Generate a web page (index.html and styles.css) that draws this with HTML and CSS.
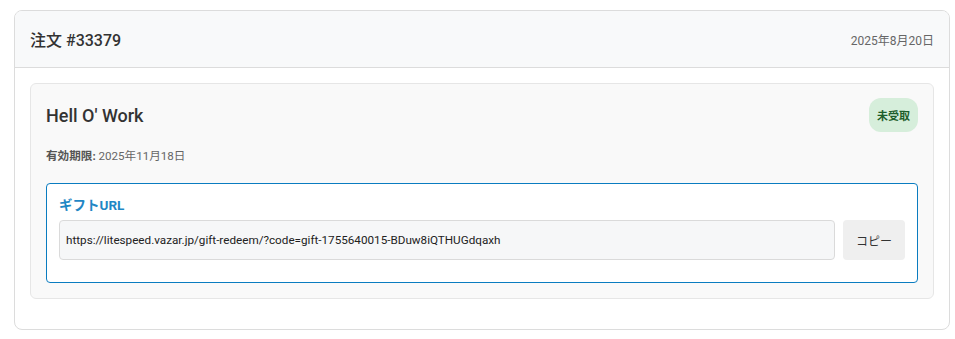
FILE: index.html
```html
<!DOCTYPE html>
<html lang="ja">
<head>
    <meta charset="UTF-8">
    <meta name="viewport" content="width=device-width, initial-scale=1.0">
    <title>注文 #33379</title>
    <link rel="stylesheet" href="styles.css">
</head>
<body>

    <div class="page">
        <div class="order-card">
            <!-- Order header -->
            <div class="order-header">
                <h2 class="order-title">注文 #33379</h2>
                <span class="order-date">2025年8月20日</span>
            </div>

            <div class="order-body">
                <!-- Gift item -->
                <div class="gift-card">
                    <div class="gift-top">
                        <h3 class="gift-name">Hell O' Work</h3>
                        <span class="status-badge">未受取</span>
                    </div>

                    <p class="gift-expiry"><strong>有効期限:</strong> 2025年11月18日</p>

                    <div class="gift-url-box">
                        <div class="gift-url-label">ギフトURL</div>
                        <div class="url-row">
                            <input type="text" class="url-input" id="giftUrl" readonly
                                   value="https://litespeed.vazar.jp/gift-redeem/?code=gift-1755640015-BDuw8iQTHUGdqaxh">
                            <button class="copy-btn" type="button">コピー</button>
                        </div>
                    </div>
                </div>
            </div>
        </div>
    </div>

</body>
</html>
```

FILE: styles.css
```css
body {
    font-family: Roboto, "Noto Sans CJK JP", sans-serif;
    margin: 0;
    background-color: #ffffff;
    color: #333;
}
.page {
    padding: 10px 5px 10px 14px;
}
.order-card {
    border: 1px solid #dcdcdc;
    border-radius: 8px;
    background-color: #fff;
    overflow: hidden;
}
.order-header {
    display: flex;
    justify-content: space-between;
    align-items: center;
    height: 56px;
    padding: 0 15px;
    background-color: #f8f9fa;
    border-bottom: 1px solid #dcdcdc;
}
.order-title {
    margin: 0;
    font-size: 16px;
    font-weight: 500;
    color: #333;
}
.order-date {
    font-size: 12px;
    color: #666;
}
.order-body {
    padding: 15px 15px 30px;
}
.gift-card {
    background-color: #f9f9f9;
    border: 1px solid #e6e6e6;
    border-radius: 6px;
    padding: 14px 15px 15px;
}
.gift-top {
    display: flex;
    justify-content: space-between;
    align-items: center;
}
.gift-name {
    margin: 0;
    font-size: 18px;
    font-weight: 500;
    color: #333;
}
.status-badge {
    display: inline-flex;
    align-items: center;
    height: 34px;
    padding: 0 8px;
    border-radius: 12px;
    background-color: #d6eedb;
    color: #1e5e2c;
    font-size: 11px;
    font-weight: 700;
}
.gift-expiry {
    margin: 16px 0 19px;
    font-size: 11.6px;
    line-height: 16px;
    color: #666;
}
.gift-expiry strong {
    color: #555;
}
.gift-url-box {
    background-color: #fff;
    border: 1px solid #0a7cc0;
    border-radius: 4px;
    padding: 11px 12px 22px;
}
.gift-url-label {
    font-size: 13.5px;
    font-weight: 700;
    color: #1f87c5;
    line-height: 20px;
    margin-bottom: 5px;
}
.url-row {
    display: flex;
    gap: 8px;
}
.url-input {
    flex: 1;
    height: 40px;
    box-sizing: border-box;
    padding: 0 6px;
    border: 1px solid #dadada;
    border-radius: 4px;
    background-color: #f6f7f8;
    font-family: Roboto, "Noto Sans CJK JP", sans-serif;
    font-size: 11.7px;
    color: #222;
}
.copy-btn {
    width: 62px;
    height: 40px;
    border: none;
    border-radius: 4px;
    background-color: #efefef;
    font-family: Roboto, "Noto Sans CJK JP", sans-serif;
    font-size: 12px;
    color: #333;
}
```
